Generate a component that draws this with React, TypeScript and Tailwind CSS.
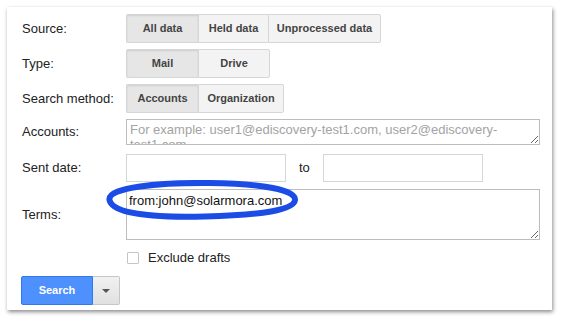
import React from "react";

const font = { fontFamily: '"Liberation Sans", Arial, sans-serif' };

type Seg = { label: string; w: string; on?: boolean };

function Segmented({ items }: { items: Seg[] }) {
    return (
        <div className="flex h-full">
            {items.map((it, i) => {
                const first = i === 0;
                const last = i === items.length - 1;
                return (
                    <div
                        key={it.label}
                        className={[
                            "flex h-full items-center justify-center border-y border-l border-[#d6d6d6] text-[11px] font-bold text-[#444]",
                            it.w,
                            first ? "rounded-l-[2px]" : "",
                            last ? "rounded-r-[2px] border-r" : "",
                            it.on
                                ? "bg-[#e6e6e6] shadow-[inset_0_1px_2px_rgba(0,0,0,0.1)] text-[#333]"
                                : "bg-[#f3f3f3]",
                        ].join(" ")}
                    >
                        {it.label}
                    </div>
                );
            })}
        </div>
    );
}

function Row({ label, className, children }: { label: string; className: string; children: React.ReactNode }) {
    return (
        <div className={"flex items-center " + className}>
            <div className="w-[104px] shrink-0 text-[13px] text-[#222]">{label}</div>
            <div className="flex h-full items-center">{children}</div>
        </div>
    );
}

export default function App() {
    return (
        <div className="h-[321px] w-[562px] overflow-hidden bg-white pl-[7px] pt-[7px]" style={font}>
            <div className="relative flex h-[303px] w-[545px] flex-col bg-white pl-[15px] pt-[7px] shadow-[1px_2px_4px_rgba(0,0,0,0.45)]">
                <Row label="Source:" className="h-[29px]">
                    <Segmented
                        items={[
                            { label: "All data", w: "w-[72px]", on: true },
                            { label: "Held data", w: "w-[70px]" },
                            { label: "Unprocessed data", w: "w-[113px]" },
                        ]}
                    />
                </Row>
                <Row label="Type:" className="mt-[6px] h-[29px]">
                    <Segmented
                        items={[
                            { label: "Mail", w: "w-[72px]", on: true },
                            { label: "Drive", w: "w-[72px]" },
                        ]}
                    />
                </Row>
                <Row label="Search method:" className="mt-[6px] h-[29px]">
                    <Segmented
                        items={[
                            { label: "Accounts", w: "w-[72px]", on: true },
                            { label: "Organization", w: "w-[86px]" },
                        ]}
                    />
                </Row>
                <Row label="Accounts:" className="mt-[6px] h-[26px]">
                    <textarea
                        readOnly
                        placeholder="For example: user1@ediscovery-test1.com, user2@ediscovery-test1.com"
                        className="h-[26px] w-[414px] resize-y overflow-hidden border border-[#bdbdbd] px-[3px] pt-[2px] text-[13px] leading-[15px] text-[#222] placeholder:text-[#a3a3a3] outline-none"
                        style={font}
                    />
                </Row>
                <Row label="Sent date:" className="mt-[9px] h-[28px]">
                    <input className="h-[28px] w-[160px] border border-[#d6d6d6] outline-none" readOnly />
                    <span className="ml-[13px] mr-[13px] text-[13px] text-[#222]">to</span>
                    <input className="h-[28px] w-[160px] border border-[#d6d6d6] outline-none" readOnly />
                </Row>
                <Row label="Terms:" className="mt-[7px] h-[51px]">
                    <textarea
                        readOnly
                        defaultValue="from:john@solarmora.com"
                        className="h-[51px] w-[414px] resize-y overflow-hidden border border-[#bdbdbd] px-[2px] pt-[3px] text-[13px] leading-[15px] text-[#111] outline-none"
                        style={font}
                    />
                </Row>
                <div className="mt-[12px] flex h-[12px] items-center pl-[105px]">
                    <div className="h-[12px] w-[12px] rounded-[1px] border border-[#c6c6c6] bg-white" />
                    <span className="ml-[9px] text-[13px] text-[#222]">Exclude drafts</span>
                </div>
                <div className="-ml-px mt-[12px] flex h-[29px]">
                    <div className="flex w-[72px] items-center justify-center rounded-l-[2px] border border-[#3079ed] bg-[#4d90fe] text-[11px] font-bold text-white">
                        Search
                    </div>
                    <div className="flex w-[27px] items-center justify-center rounded-r-[2px] border-y border-r border-[#c6c6c6] bg-[linear-gradient(#f1f1f1,#e0e0e0)]">
                        <svg width="8" height="4" viewBox="0 0 8 4">
                            <path d="M0 0 L8 0 L4 4 Z" fill="#555" />
                        </svg>
                    </div>
                </div>

                <svg
                    className="pointer-events-none absolute left-[96px] top-[173px]"
                    width="206"
                    height="50"
                    viewBox="103 180 206 50"
                >
                    <path
                        d="M109.5 200 C107 187 160 182.5 210 183 C263 183.5 296 190 295 200 C294 210 262 215 205 216.5 C150 218 112 213 109.5 200 Z"
                        fill="none"
                        stroke="#1c4ce6"
                        strokeWidth="6"
                    />
                </svg>
            </div>
        </div>
    );
}
